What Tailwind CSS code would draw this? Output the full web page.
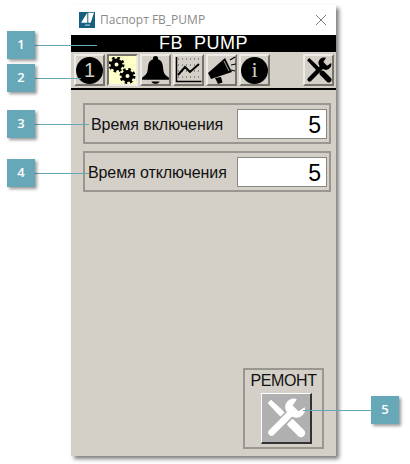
<!DOCTYPE html>
<html lang="en">
<head>
  <meta charset="UTF-8">
  <title>Паспорт FB_PUMP</title>
  <script src="https://cdn.jsdelivr.net/npm/@tailwindcss/browser@4"></script>
</head>
<body class="bg-white font-['Liberation_Sans',sans-serif]">
  <div class="relative w-[410px] h-[464px] overflow-hidden pt-[5px] pl-[71px]">
    <!-- Window -->
    <div class="w-[265px] h-[451px] flex flex-col bg-[#d4d0c8] shadow-[3px_3px_4px_rgba(0,0,0,0.5)]">
      <div class="h-[30px] shrink-0 bg-white flex items-center pl-2 pr-[10px]">
        <svg class="w-4 h-4" viewBox="0 0 16 16">
          <rect width="16" height="16" fill="#17607f"/>
          <path d="M2 10.700 L8.300 .7 V10.700Z M9.300 .7 H15 L11.700 10.700 H9.300Z" fill="#fff"/>
          <rect x="6" y="12.500" width="5" height="1.200" fill="#9fc3d2"/>
        </svg>
        <span class="ml-[5px] text-[12px] text-[#8a8a8a] font-['Open_Sans',sans-serif]">Паспорт FB_PUMP</span>
        <svg class="ml-auto w-[10px] h-[10px]" viewBox="0 0 10 10" fill="none" stroke="#7d7d7d"><path d="M0 0 L10 10 M10 0 L0 10"/></svg>
      </div>

      <div class="h-[17px] shrink-0 bg-black text-white text-[18px] leading-[17px] tracking-[0.5px] text-center whitespace-pre">FB  PUMP</div>

      <!-- Toolbar -->
      <div class="h-[38px] shrink-0 flex items-center gap-[2px] pl-[3px] pr-[2px] border-b-2 border-black">
        <div class="w-[31px] h-[32px] flex items-center justify-center border-2 border-[#ecebe6] border-r-[#77746e] border-b-[#77746e]">
          <div class="w-[27px] h-[27px] rounded-full bg-black text-[#d4d0c8] text-[20px] flex items-center justify-center">1</div>
        </div>
        <div class="w-[31px] h-[32px] flex items-center justify-center bg-[#ffffc8] border-2 border-[#77746e] border-r-[#ecebe6] border-b-[#ecebe6]">
          <svg class="w-[27px] h-[27px]" viewBox="0 0 27 27">
            <circle cx="7.500" cy="7.500" r="4" fill="none" stroke="#000" stroke-width="4"/>
            <circle cx="7.500" cy="7.500" r="6.500" fill="none" stroke="#000" stroke-width="3" stroke-dasharray="2.500 2.600"/>
            <circle cx="18.500" cy="19" r="4" fill="none" stroke="#000" stroke-width="4"/>
            <circle cx="18.500" cy="19" r="6.500" fill="none" stroke="#000" stroke-width="3" stroke-dasharray="2.500 2.600"/>
          </svg>
        </div>
        <div class="w-[31px] h-[32px] flex items-center justify-center border-2 border-[#ecebe6] border-r-[#77746e] border-b-[#77746e]">
          <svg class="w-[29px] h-[29px] shrink-0" viewBox="0 0 27 28">
            <circle cx="13.500" cy="2.500" r="2.500"/>
            <path d="M13.500 3 C7.500 3 6.500 7 6 13 C5.500 18 3 19 .5 21 V23 H26.500 V21 C24 19 21.500 18 21 13 C20.500 7 19.500 3 13.500 3Z"/>
            <path d="M9.500 24.500 H17.500 C16.500 27.500 10.500 27.500 9.500 24.500Z"/>
          </svg>
        </div>
        <div class="w-[31px] h-[32px] flex items-center justify-center border-2 border-[#ecebe6] border-r-[#77746e] border-b-[#77746e]">
          <svg class="w-[27px] h-[28px]" viewBox="0 0 27 28" fill="none" stroke="#000">
            <path d="M3 3 H26 M3 9 H26 M3 15 H26 M3 21 H26" stroke-dasharray="1 3" stroke="#444"/>
            <path d="M1.500 1 V25.500 H26.500" stroke-width="1.500"/>
            <path d="M3 19 L10 11 L15 16 L24 8" stroke-width="2"/>
          </svg>
        </div>
        <div class="w-[31px] h-[32px] flex items-center justify-center border-2 border-[#ecebe6] border-r-[#77746e] border-b-[#77746e]">
          <svg class="w-[28px] h-[28px] shrink-0" viewBox="0 0 28 28">
            <path d="M0 17 L17 2 L24 16 L3 23Z"/>
            <path d="M7 22 L13 21 L14.500 26.500 L10 28Z"/>
            <path d="M22 4 L27 1 M23 9 L28 8 M23 14 L27 15" stroke="#000" stroke-width="1.200"/>
            <path d="M16 5 L21 15" stroke="#d4d0c8" stroke-width=".8"/>
          </svg>
        </div>
        <div class="w-[31px] h-[32px] flex items-center justify-center border-2 border-[#ecebe6] border-r-[#77746e] border-b-[#77746e]">
          <div class="w-[27px] h-[27px] rounded-full bg-black text-[#d4d0c8] text-[22px] leading-none font-['Liberation_Serif',serif] flex items-center justify-center">i</div>
        </div>
        <div class="ml-auto w-[31px] h-[32px] flex items-center justify-center border-2 border-[#ecebe6] border-r-[#77746e] border-b-[#77746e]">
          <svg class="w-[26px] h-[26px] shrink-0" viewBox="0 0 24 24">
            <path d="M1 3 L3 1 L9 6.500 L11 8.500 L13.500 11 L11 13.500 L8.500 11 L6.500 9Z"/>
            <path d="M15 15 L21 21" stroke="#000" stroke-width="5" stroke-linecap="round"/>
            <path d="M3.300 20.700 L14 10" stroke="#000" stroke-width="4" stroke-linecap="round"/>
            <path d="M18.500 .8 L16 4.500 L19.500 8 L23.200 5.500 A5 5 0 0 1 14.500 10 A5 5 0 0 1 18.500 .8Z"/>
          </svg>
        </div>
      </div>

      <!-- Settings -->
      <div class="flex-1 flex flex-col pt-[13px] pl-3 pr-[5px] pb-[7px]">
        <div class="h-[41px] flex items-center pl-[6px] pr-[2px] border-2 border-[#9a9791]">
          <span class="mt-[3px] text-[16px] tracking-[-0.05px] text-[#111]">Время включения</span>
          <div class="ml-auto w-[90px] h-[30px] bg-white border border-[#8a8882] text-right pr-[5px] text-[23px] leading-[30px] text-black">5</div>
        </div>
        <div class="mt-[7px] h-[41px] flex items-center pl-[3px] pr-[2px] border-2 border-[#9a9791]">
          <span class="mt-[3px] text-[16px] tracking-[-0.1px] text-[#111]">Время отключения</span>
          <div class="ml-auto w-[90px] h-[30px] bg-white border border-[#8a8882] text-right pr-[5px] text-[23px] leading-[30px] text-black">5</div>
        </div>
        <div class="mt-auto self-end mr-[7px] w-[81px] h-[81px] flex flex-col items-center border-2 border-[#9a9791]">
          <span class="text-[16px] tracking-[-0.4px] leading-[22px] text-[#111]">РЕМОНТ</span>
          <div class="ml-[6px] mt-[1px] w-[51px] h-[51px] flex items-center justify-center bg-[#b0b0b0] border border-white border-r-2 border-b-2 border-r-[#333] border-b-[#333]">
            <svg class="w-[40px] h-[40px] shrink-0" viewBox="0 0 24 24">
              <path d="M1 3 L3 1 L9 6.500 L11 8.500 L13.500 11 L11 13.500 L8.500 11 L6.500 9Z" fill="#fff"/>
              <path d="M15 15 L21 21" stroke="#fff" stroke-width="5" stroke-linecap="round"/>
              <path d="M3.300 20.700 L14 10" stroke="#b0b0b0" stroke-width="6"/>
              <path d="M3.300 20.700 L14 10" stroke="#fff" stroke-width="4" stroke-linecap="round"/>
              <path d="M18.500 .8 L16 4.500 L19.500 8 L23.200 5.500 A5 5 0 0 1 14.500 10 A5 5 0 0 1 18.500 .8Z" fill="#fff"/>
            </svg>
          </div>
        </div>
      </div>
    </div>

    <!-- Callouts -->
    <div class="absolute left-[35px] top-[45px] w-[62px] h-px bg-[#66a8b8]"></div>
    <div class="absolute left-[35px] top-[78px] w-[46px] h-px bg-[#66a8b8]"></div>
    <div class="absolute left-[35px] top-[124px] w-[54px] h-px bg-[#66a8b8]"></div>
    <div class="absolute left-[35px] top-[173px] w-[54px] h-px bg-[#66a8b8]"></div>
    <div class="absolute left-[303px] top-[410px] w-[68px] h-px bg-[#66a8b8]"></div>
    <div class="absolute left-[7px] top-[31px] w-[28px] h-[28px] bg-[#66a8b8] text-white text-[13px] font-semibold font-['Open_Sans',sans-serif] flex items-center justify-center shadow-[2px_2px_3px_rgba(0,0,0,0.4)]">1</div>
    <div class="absolute left-[7px] top-[64px] w-[28px] h-[28px] bg-[#66a8b8] text-white text-[13px] font-semibold font-['Open_Sans',sans-serif] flex items-center justify-center shadow-[2px_2px_3px_rgba(0,0,0,0.4)]">2</div>
    <div class="absolute left-[7px] top-[110px] w-[28px] h-[28px] bg-[#66a8b8] text-white text-[13px] font-semibold font-['Open_Sans',sans-serif] flex items-center justify-center shadow-[2px_2px_3px_rgba(0,0,0,0.4)]">3</div>
    <div class="absolute left-[7px] top-[159px] w-[28px] h-[28px] bg-[#66a8b8] text-white text-[13px] font-semibold font-['Open_Sans',sans-serif] flex items-center justify-center shadow-[2px_2px_3px_rgba(0,0,0,0.4)]">4</div>
    <div class="absolute left-[371px] top-[396px] w-[28px] h-[28px] bg-[#66a8b8] text-white text-[13px] font-semibold font-['Open_Sans',sans-serif] flex items-center justify-center shadow-[2px_2px_3px_rgba(0,0,0,0.4)]">5</div>
  </div>
</body>
</html>
